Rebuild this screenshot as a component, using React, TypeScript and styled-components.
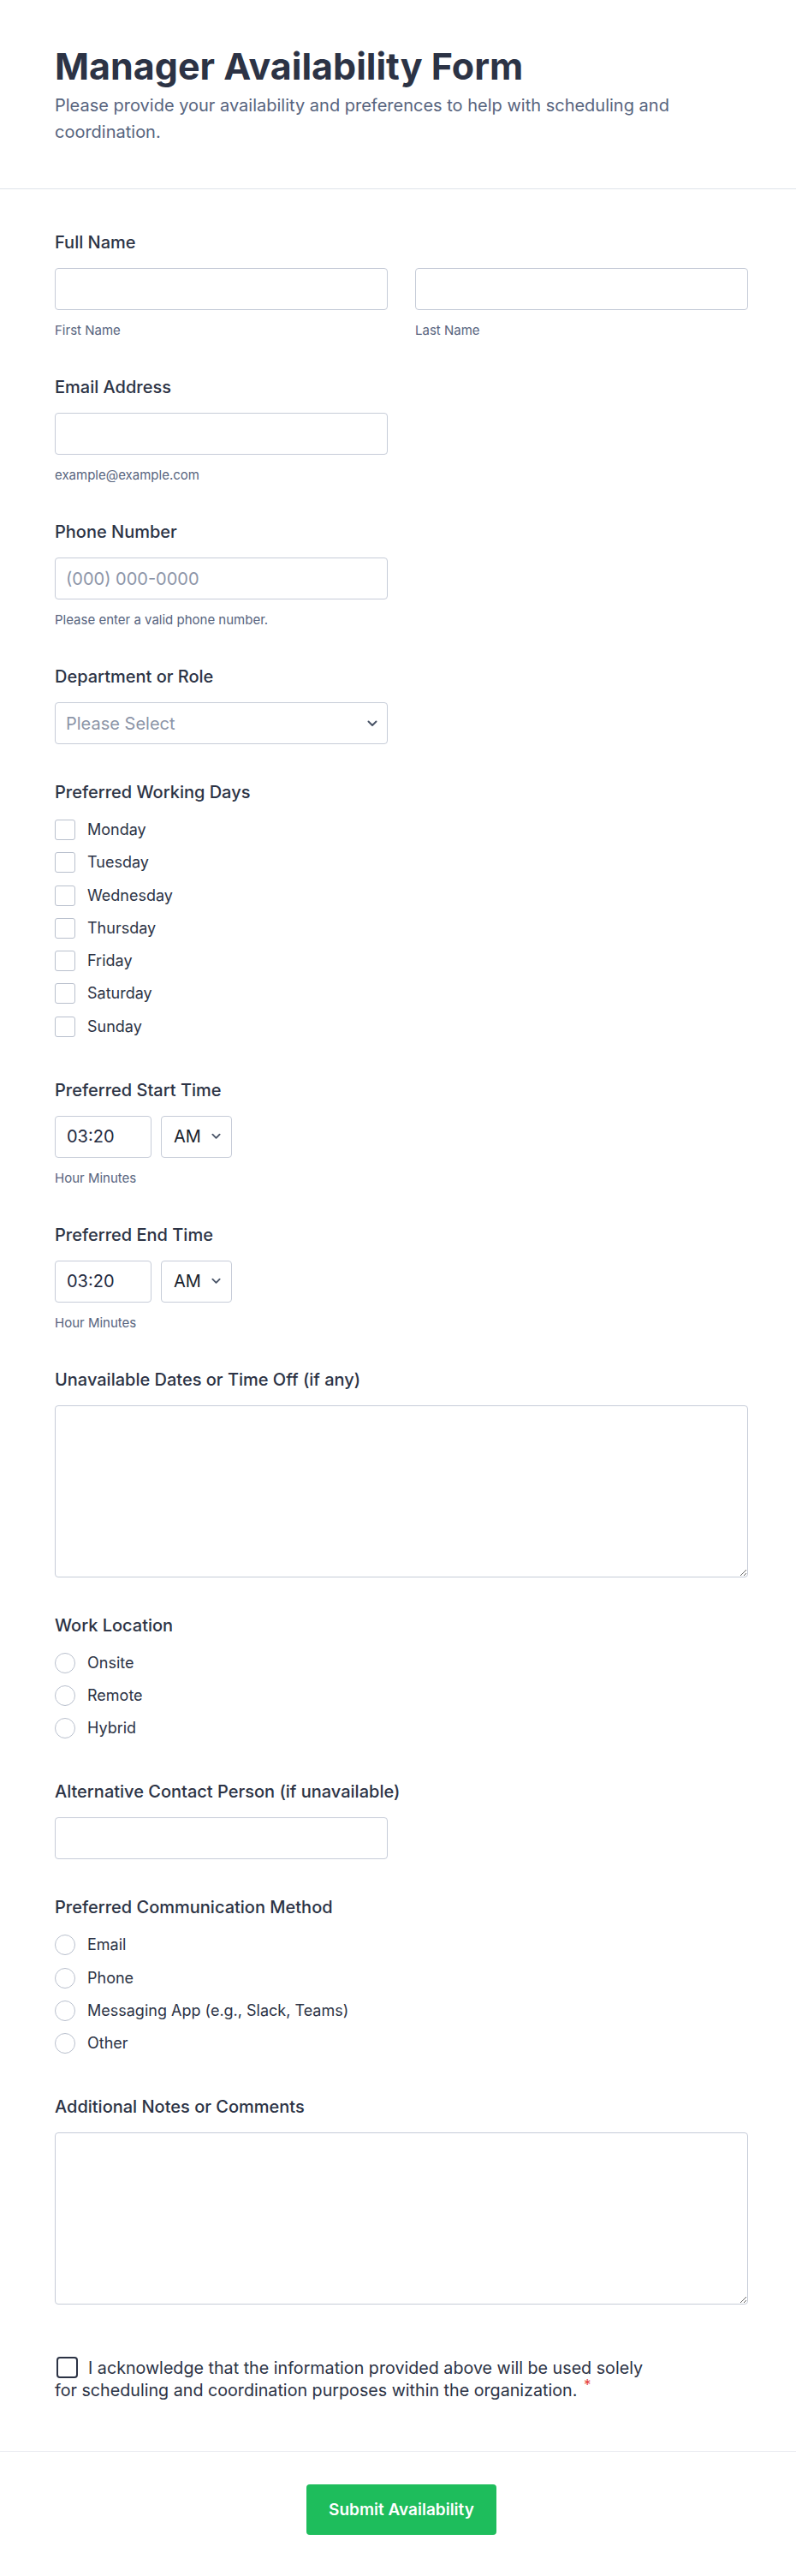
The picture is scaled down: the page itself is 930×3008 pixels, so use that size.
import styled, {createGlobalStyle} from 'styled-components'

const GlobalStyle = createGlobalStyle`
  * {
    box-sizing: border-box;
  }
  body {
    margin: 0;
    background: #fff;
    font-family: Inter, "Noto Sans", "Liberation Sans", sans-serif;
    color: #2c3345;
  }
`

const days = ['Monday', 'Tuesday', 'Wednesday', 'Thursday', 'Friday', 'Saturday', 'Sunday']
const locations = ['Onsite', 'Remote', 'Hybrid']
const methods = ['Email', 'Phone', 'Messaging App (e.g., Slack, Teams)', 'Other']

function Chevron({size = 12}: {size?: number}) {
    return (
        <svg width={size} height={size * 0.7} viewBox="0 0 12 8" fill="none">
            <path d="M1.5 1.5L6 6L10.5 1.5" stroke="#4a5568" strokeWidth="2" strokeLinecap="round"
                  strokeLinejoin="round"/>
        </svg>
    )
}

function TimeField({label}: {label: string}) {
    return (
        <Field>
            <Label>{label}</Label>
            <TimeRow>
                <HourInput type="text" defaultValue="03:20"/>
                <SelectWrap $width={83}>
                    <AmSelect defaultValue="AM">
                        <option>AM</option>
                        <option>PM</option>
                    </AmSelect>
                    <ChevronSpot $right={13}><Chevron size={11}/></ChevronSpot>
                </SelectWrap>
            </TimeRow>
            <Sublabel>Hour Minutes</Sublabel>
        </Field>
    )
}

function App() {
    return (
        <>
            <GlobalStyle/>
            <Page>
                <Header>
                    <Title>Manager Availability Form</Title>
                    <Subtitle>
                        Please provide your availability and preferences to help with scheduling and coordination.
                    </Subtitle>
                </Header>

                <Form>
                    <Field>
                        <Label>Full Name</Label>
                        <TwoCols>
                            <div>
                                <TextInput type="text"/>
                                <Sublabel>First Name</Sublabel>
                            </div>
                            <div>
                                <TextInput type="text"/>
                                <Sublabel>Last Name</Sublabel>
                            </div>
                        </TwoCols>
                    </Field>

                    <Field>
                        <Label>Email Address</Label>
                        <Half>
                            <TextInput type="email"/>
                            <Sublabel>example@example.com</Sublabel>
                        </Half>
                    </Field>

                    <Field>
                        <Label>Phone Number</Label>
                        <Half>
                            <TextInput type="tel" placeholder="(000) 000-0000"/>
                            <Sublabel>Please enter a valid phone number.</Sublabel>
                        </Half>
                    </Field>

                    <Field>
                        <Label>Department or Role</Label>
                        <Half>
                            <SelectWrap>
                                <Select defaultValue="">
                                    <option value="">Please Select</option>
                                    <option>Operations</option>
                                    <option>Sales</option>
                                    <option>Human Resources</option>
                                </Select>
                                <ChevronSpot $right={12}><Chevron/></ChevronSpot>
                            </SelectWrap>
                        </Half>
                    </Field>

                    <Field $list>
                        <Label>Preferred Working Days</Label>
                        <OptionList>
                            {days.map(day => (
                                <Option key={day}>
                                    <CheckBox/>
                                    {day}
                                </Option>
                            ))}
                        </OptionList>
                    </Field>

                    <TimeField label="Preferred Start Time"/>
                    <TimeField label="Preferred End Time"/>

                    <Field>
                        <Label>Unavailable Dates or Time Off (if any)</Label>
                        <TextArea/>
                    </Field>

                    <Field $list>
                        <Label>Work Location</Label>
                        <OptionList>
                            {locations.map(loc => (
                                <Option key={loc}>
                                    <Radio/>
                                    {loc}
                                </Option>
                            ))}
                        </OptionList>
                    </Field>

                    <Field>
                        <Label>Alternative Contact Person (if unavailable)</Label>
                        <Half>
                            <TextInput type="text"/>
                        </Half>
                    </Field>

                    <Field $list>
                        <Label>Preferred Communication Method</Label>
                        <OptionList>
                            {methods.map(m => (
                                <Option key={m}>
                                    <Radio/>
                                    {m}
                                </Option>
                            ))}
                        </OptionList>
                    </Field>

                    <Field>
                        <Label>Additional Notes or Comments</Label>
                        <TextArea/>
                    </Field>

                    <Acknowledge>
                        <AckBox/>
                        I acknowledge that the information provided above will be used solely for scheduling and
                        coordination purposes within the organization. <Required>*</Required>
                    </Acknowledge>
                </Form>

                <Footer>
                    <SubmitButton type="button">Submit Availability</SubmitButton>
                </Footer>
            </Page>
        </>
    )
}

const Page = styled.div`
  width: 930px;
  min-height: 3008px;
  background: #fff;
`

const Header = styled.header`
  padding: 52px 64px 50px;
  border-bottom: 1px solid #dfe3ea;
`

const Title = styled.h1`
  margin: 0;
  font-size: 43px;
  line-height: 50px;
  font-weight: 700;
  color: #2c3345;
`

const Subtitle = styled.p`
  margin: 6px 0 0;
  max-width: 760px;
  font-size: 20px;
  line-height: 31px;
  color: #57647e;
`

const Form = styled.form`
  padding: 50px 56px 58px 64px;
  display: flex;
  flex-direction: column;
`

const Field = styled.div<{ $list?: boolean }>`
  display: flex;
  flex-direction: column;
  margin-bottom: ${p => (p.$list ? '50px' : '44px')};
`

const Label = styled.label`
  font-size: 20px;
  line-height: 24px;
  font-weight: 500;
  color: #2c3345;
  margin-bottom: 18px;
`

const Sublabel = styled.div`
  margin-top: 14px;
  font-size: 15px;
  line-height: 20px;
  color: #57647e;
`

const TwoCols = styled.div`
  display: grid;
  grid-template-columns: 1fr 1fr;
  gap: 32px;
`

const Half = styled.div`
  width: 389px;
`

const TextInput = styled.input`
  display: block;
  width: 100%;
  height: 49px;
  padding: 0 12px;
  border: 1px solid #c6ccd8;
  border-radius: 4px;
  font-family: inherit;
  font-size: 20px;
  color: #2c3345;
  background: #fff;

  &::placeholder {
    color: #8c95a8;
  }
`

const SelectWrap = styled.div<{ $width?: number }>`
  position: relative;
  width: ${p => (p.$width ? `${p.$width}px` : '100%')};
`

const Select = styled.select`
  display: block;
  width: 100%;
  height: 49px;
  padding: 0 36px 0 12px;
  border: 1px solid #c6ccd8;
  border-radius: 4px;
  background: #fff;
  font-family: inherit;
  font-size: 20px;
  color: #8c95a8;
  appearance: none;
  -webkit-appearance: none;
`

const AmSelect = styled(Select)`
  padding: 0 0 0 14px;
  color: #1a1f2c;
`

const ChevronSpot = styled.span<{ $right: number }>`
  position: absolute;
  right: ${p => p.$right}px;
  top: 50%;
  transform: translateY(-50%);
  display: flex;
  pointer-events: none;
`

const TimeRow = styled.div`
  display: flex;
  gap: 11px;
`

const HourInput = styled(TextInput)`
  width: 113px;
  padding: 0 13px;
  color: #1f2a40;
`

const OptionList = styled.div`
  display: flex;
  flex-direction: column;
  gap: 14.3px;
  margin-top: 2px;
`

const Option = styled.label`
  display: flex;
  align-items: center;
  gap: 14px;
  font-size: 18px;
  line-height: 24px;
  color: #2c3345;
`

const CheckBox = styled.span`
  width: 24px;
  height: 24px;
  border: 1px solid #b9c0cd;
  border-radius: 3px;
  background: #fff;
  flex-shrink: 0;
`

const Radio = styled(CheckBox)`
  border-radius: 50%;
`

const TextArea = styled.textarea`
  display: block;
  width: 100%;
  height: 201px;
  padding: 10px 12px;
  border: 1px solid #c6ccd8;
  border-radius: 4px;
  font-family: inherit;
  font-size: 18px;
  color: #2c3345;
  resize: vertical;
`

const Acknowledge = styled.label`
  display: block;
  margin-top: 17px;
  max-width: 712px;
  font-size: 19.7px;
  line-height: 26px;
  color: #2c3345;
`

const AckBox = styled.span`
  display: inline-block;
  vertical-align: top;
  width: 25px;
  height: 25px;
  margin: 0 12px 0 2px;
  border: 2px solid #2c3345;
  border-radius: 4px;
`

const Required = styled.sup`
  margin-left: 2px;
  color: #e53935;
  font-size: 17px;
  line-height: 0;
`

const Footer = styled.div`
  border-top: 1px solid #eaecf1;
  padding: 38px 56px 50px 64px;
  display: flex;
  justify-content: center;
`

const SubmitButton = styled.button`
  width: 222px;
  height: 59px;
  border: none;
  border-radius: 4px;
  background: #1ebd5c;
  color: #fff;
  font-family: inherit;
  font-size: 19px;
  font-weight: 600;
  cursor: pointer;
`

export default App
